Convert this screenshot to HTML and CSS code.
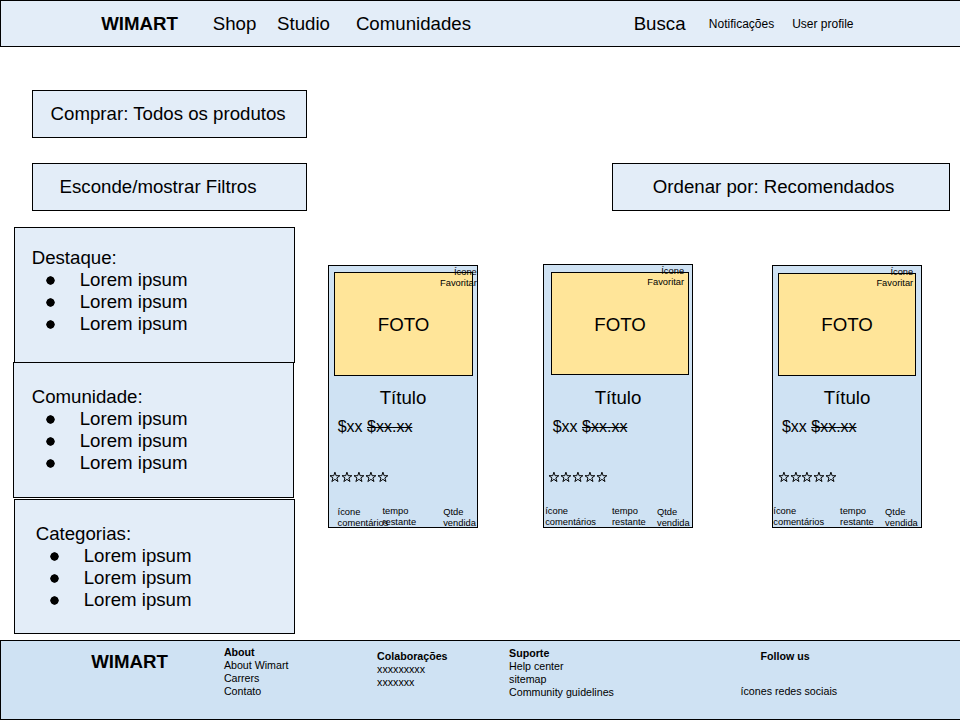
FILE: index.html
```html
<!DOCTYPE html>
<html lang="pt-BR">
<head>
<meta charset="utf-8">
<title>WIMART</title>
<link rel="stylesheet" href="styles.css">
</head>
<body>
<svg class="defs" width="0" height="0" aria-hidden="true">
  <symbol id="star" viewBox="0 0 12 12"><path d="M6 1.1 7.2 4.7H11L7.95 6.95 9.1 10.6 6 8.4 2.9 10.6 4.05 6.95 1 4.7H4.8Z" fill="none" stroke="#000" stroke-width="1"/></symbol>
</svg>
<header class="navbar">
  <strong>WIMART</strong>
  <span>Shop</span>
  <span>Studio</span>
  <span>Comunidades</span>
  <span>Busca</span>
  <span class="nav-small">Notificações</span>
  <span class="nav-small">User profile</span>
</header>
<main>
  <div class="box heading">Comprar: Todos os produtos</div>
  <div class="toolbar">
    <div class="box filter-toggle">Esconde/mostrar Filtros</div>
    <div class="box sort">Ordenar por: Recomendados</div>
  </div>
  <div class="content">
    <aside class="filters">
      <section class="panel panel-featured">
        <h2>Destaque:</h2>
        <ul><li>Lorem ipsum</li><li>Lorem ipsum</li><li>Lorem ipsum</li></ul>
      </section>
      <section class="panel panel-community">
        <h2>Comunidade:</h2>
        <ul><li>Lorem ipsum</li><li>Lorem ipsum</li><li>Lorem ipsum</li></ul>
      </section>
      <section class="panel panel-categories">
        <h2>Categorias:</h2>
        <ul><li>Lorem ipsum</li><li>Lorem ipsum</li><li>Lorem ipsum</li></ul>
      </section>
    </aside>
    <div class="products">
      <article class="card card-a">
        <div class="photo">FOTO</div>
        <div class="favorite">Ícone<br>Favoritar</div>
        <h3>Título</h3>
        <p class="price">$xx <s>$xx.xx</s></p>
        <div class="stars"><svg><use href="#star"/></svg><svg><use href="#star"/></svg><svg><use href="#star"/></svg><svg><use href="#star"/></svg><svg><use href="#star"/></svg></div>
        <div class="meta"><span>ícone<br>comentários</span><span class="time">tempo<br>restante</span><span class="sold">Qtde<br>vendida</span></div>
      </article>
      <article class="card card-b">
        <div class="photo">FOTO</div>
        <div class="favorite">Ícone<br>Favoritar</div>
        <h3>Título</h3>
        <p class="price">$xx <s>$xx.xx</s></p>
        <div class="stars"><svg><use href="#star"/></svg><svg><use href="#star"/></svg><svg><use href="#star"/></svg><svg><use href="#star"/></svg><svg><use href="#star"/></svg></div>
        <div class="meta"><span>ícone<br>comentários</span><span class="time">tempo<br>restante</span><span class="sold">Qtde<br>vendida</span></div>
      </article>
      <article class="card card-c">
        <div class="photo">FOTO</div>
        <div class="favorite">Ícone<br>Favoritar</div>
        <h3>Título</h3>
        <p class="price">$xx <s>$xx.xx</s></p>
        <div class="stars"><svg><use href="#star"/></svg><svg><use href="#star"/></svg><svg><use href="#star"/></svg><svg><use href="#star"/></svg><svg><use href="#star"/></svg></div>
        <div class="meta"><span>ícone<br>comentários</span><span class="time">tempo<br>restante</span><span class="sold">Qtde<br>vendida</span></div>
      </article>
    </div>
  </div>
</main>
<footer class="footer">
  <strong class="brand">WIMART</strong>
  <div class="about"><b>About</b><br>About Wimart<br>Carrers<br>Contato</div>
  <div class="collab"><b>Colaborações</b><br>xxxxxxxxx<br>xxxxxxx</div>
  <div class="support"><b>Suporte</b><br>Help center<br>sitemap<br>Community guidelines</div>
  <div class="follow"><b>Follow us</b><span>ícones redes sociais</span></div>
</footer>
</body>
</html>
```
FILE: styles.css
```css
* { box-sizing: border-box; }

body {
  margin: 0;
  width: 960px;
  height: 720px;
  overflow: hidden;
  display: flex;
  flex-direction: column;
  background: #fff;
  color: #000;
  font-family: "Liberation Sans", Arial, sans-serif;
  font-size: 18.667px;
  line-height: 22px;
}

h2, h3, p, ul { margin: 0; padding: 0; font: inherit; }
.defs { display: block; height: 0; }

.navbar {
  flex: none;
  height: 47px;
  display: grid;
  grid-template-columns: 111.6px 64.3px 78.8px 277.8px 75.2px 83.3px auto;
  padding: 12px 0 0 100.2px;
  border: 1px solid #000;
  border-right: 0;
  background: #e3edf8;
  white-space: nowrap;
}
.nav-small { font-size: 12px; }

main { flex: 1; min-height: 0; padding-top: 43px; }

.box {
  width: 275px;
  height: 48px;
  padding-top: 12px;
  border: 1px solid #000;
  background: #e3edf8;
  white-space: nowrap;
}
.heading { margin-left: 32px; padding-left: 17.6px; }
.toolbar {
  display: flex;
  justify-content: space-between;
  margin: 25px 10px 16px 32px;
}
.filter-toggle { padding-left: 26.6px; }
.sort { width: 338px; padding-left: 39.8px; }

.content { display: flex; align-items: flex-start; }
.filters { width: 282px; margin-left: 13px; flex: none; }
.panel {
  width: 281px;
  height: 136px;
  border: 1px solid #000;
  background: #e3edf8;
}
.panel-featured { margin-left: 1px; padding: 19px 0 0 16.7px; }
.panel-community { margin-top: -1px; padding: 23px 0 0 17.7px; }
.panel-categories { height: 135px; margin: 1px 0 0 1px; padding: 23px 0 0 20.7px; }
.panel ul { list-style: none; }
.panel li { display: flex; align-items: center; }
.panel li::before {
  content: "";
  width: 9px;
  height: 9px;
  margin: 0 25px 0 14px;
  border-radius: 50%;
  background: radial-gradient(circle, #000 3.9px, transparent 4.6px);
}

.products { display: flex; align-items: flex-start; margin: 37px 0 0 33px; }
.card {
  position: relative;
  flex: none;
  width: 150px;
  height: 263px;
  margin-top: 1px;
  border: 1px solid #000;
  background: #cfe2f3;
}
.card-b { height: 264px; margin: 0 79px 0 65px; }
.photo {
  width: 138px;
  height: 103px;
  margin: 7px 0 0 5px;
  display: flex;
  align-items: center;
  justify-content: center;
  border: 1px solid #000;
  background: #ffe599;
}
.card-a .photo { width: 139px; height: 104px; margin-top: 6px; padding-top: 2px; }
.card-b .photo { margin-left: 7px; padding-top: 2px; }
.favorite {
  position: absolute;
  top: 1px;
  right: 0.2px;
  text-align: right;
  font-size: 9.333px;
  line-height: 11px;
}
.card-b .favorite { right: 7.9px; }
.card-c .favorite { right: 7.8px; }
.card h3 { margin-top: 11px; text-align: center; }
.card-a h3 { margin-top: 11px; }
.card-b h3 { margin-top: 12px; }
.price {
  margin: 9px 0 0 8.7px;
  font-size: 16px;
  line-height: 18px;
}
.card-c .price { margin-left: 8.9px; }
.stars { display: flex; height: 12px; margin: 35px 0 0 0.4px; }
.stars svg { flex: none; width: 11.85px; height: 12px; }
.card-b .stars { margin: 34.5px 0 0 3.5px; }
.card-b .stars svg:first-child { margin-right: 1px; }
.card-c .stars { margin: 34.5px 0 0 4.8px; }
.meta {
  display: grid;
  grid-template-columns: 66.8px 45px auto;
  margin: 23.5px 0 0 1.2px;
  font-size: 9.333px;
  line-height: 11px;
}
.card-a .meta { grid-template-columns: 44.8px 60.8px auto; margin: 24px 0 0 8.6px; }
.card-a .time { margin-top: -1px; }
.card-c .meta { margin-left: 0.3px; }
.card-b .sold, .card-c .sold { margin-top: 1px; }

.footer {
  flex: none;
  height: 80px;
  display: grid;
  grid-template-columns: 132.7px 153.2px 132px 231.5px auto;
  padding-left: 90.2px;
  border: 1px solid #000;
  border-right: 0;
  background: #cfe2f3;
  font-size: 10.667px;
  line-height: 13px;
  white-space: nowrap;
}
.brand { padding-top: 10px; font-size: 18.667px; line-height: 22px; }
.about { padding-top: 5px; }
.collab { padding-top: 9px; }
.support { padding-top: 6px; }
.follow { display: flex; flex-direction: column; gap: 22px; padding-top: 9px; }
.follow b { padding-left: 20px; }
```
